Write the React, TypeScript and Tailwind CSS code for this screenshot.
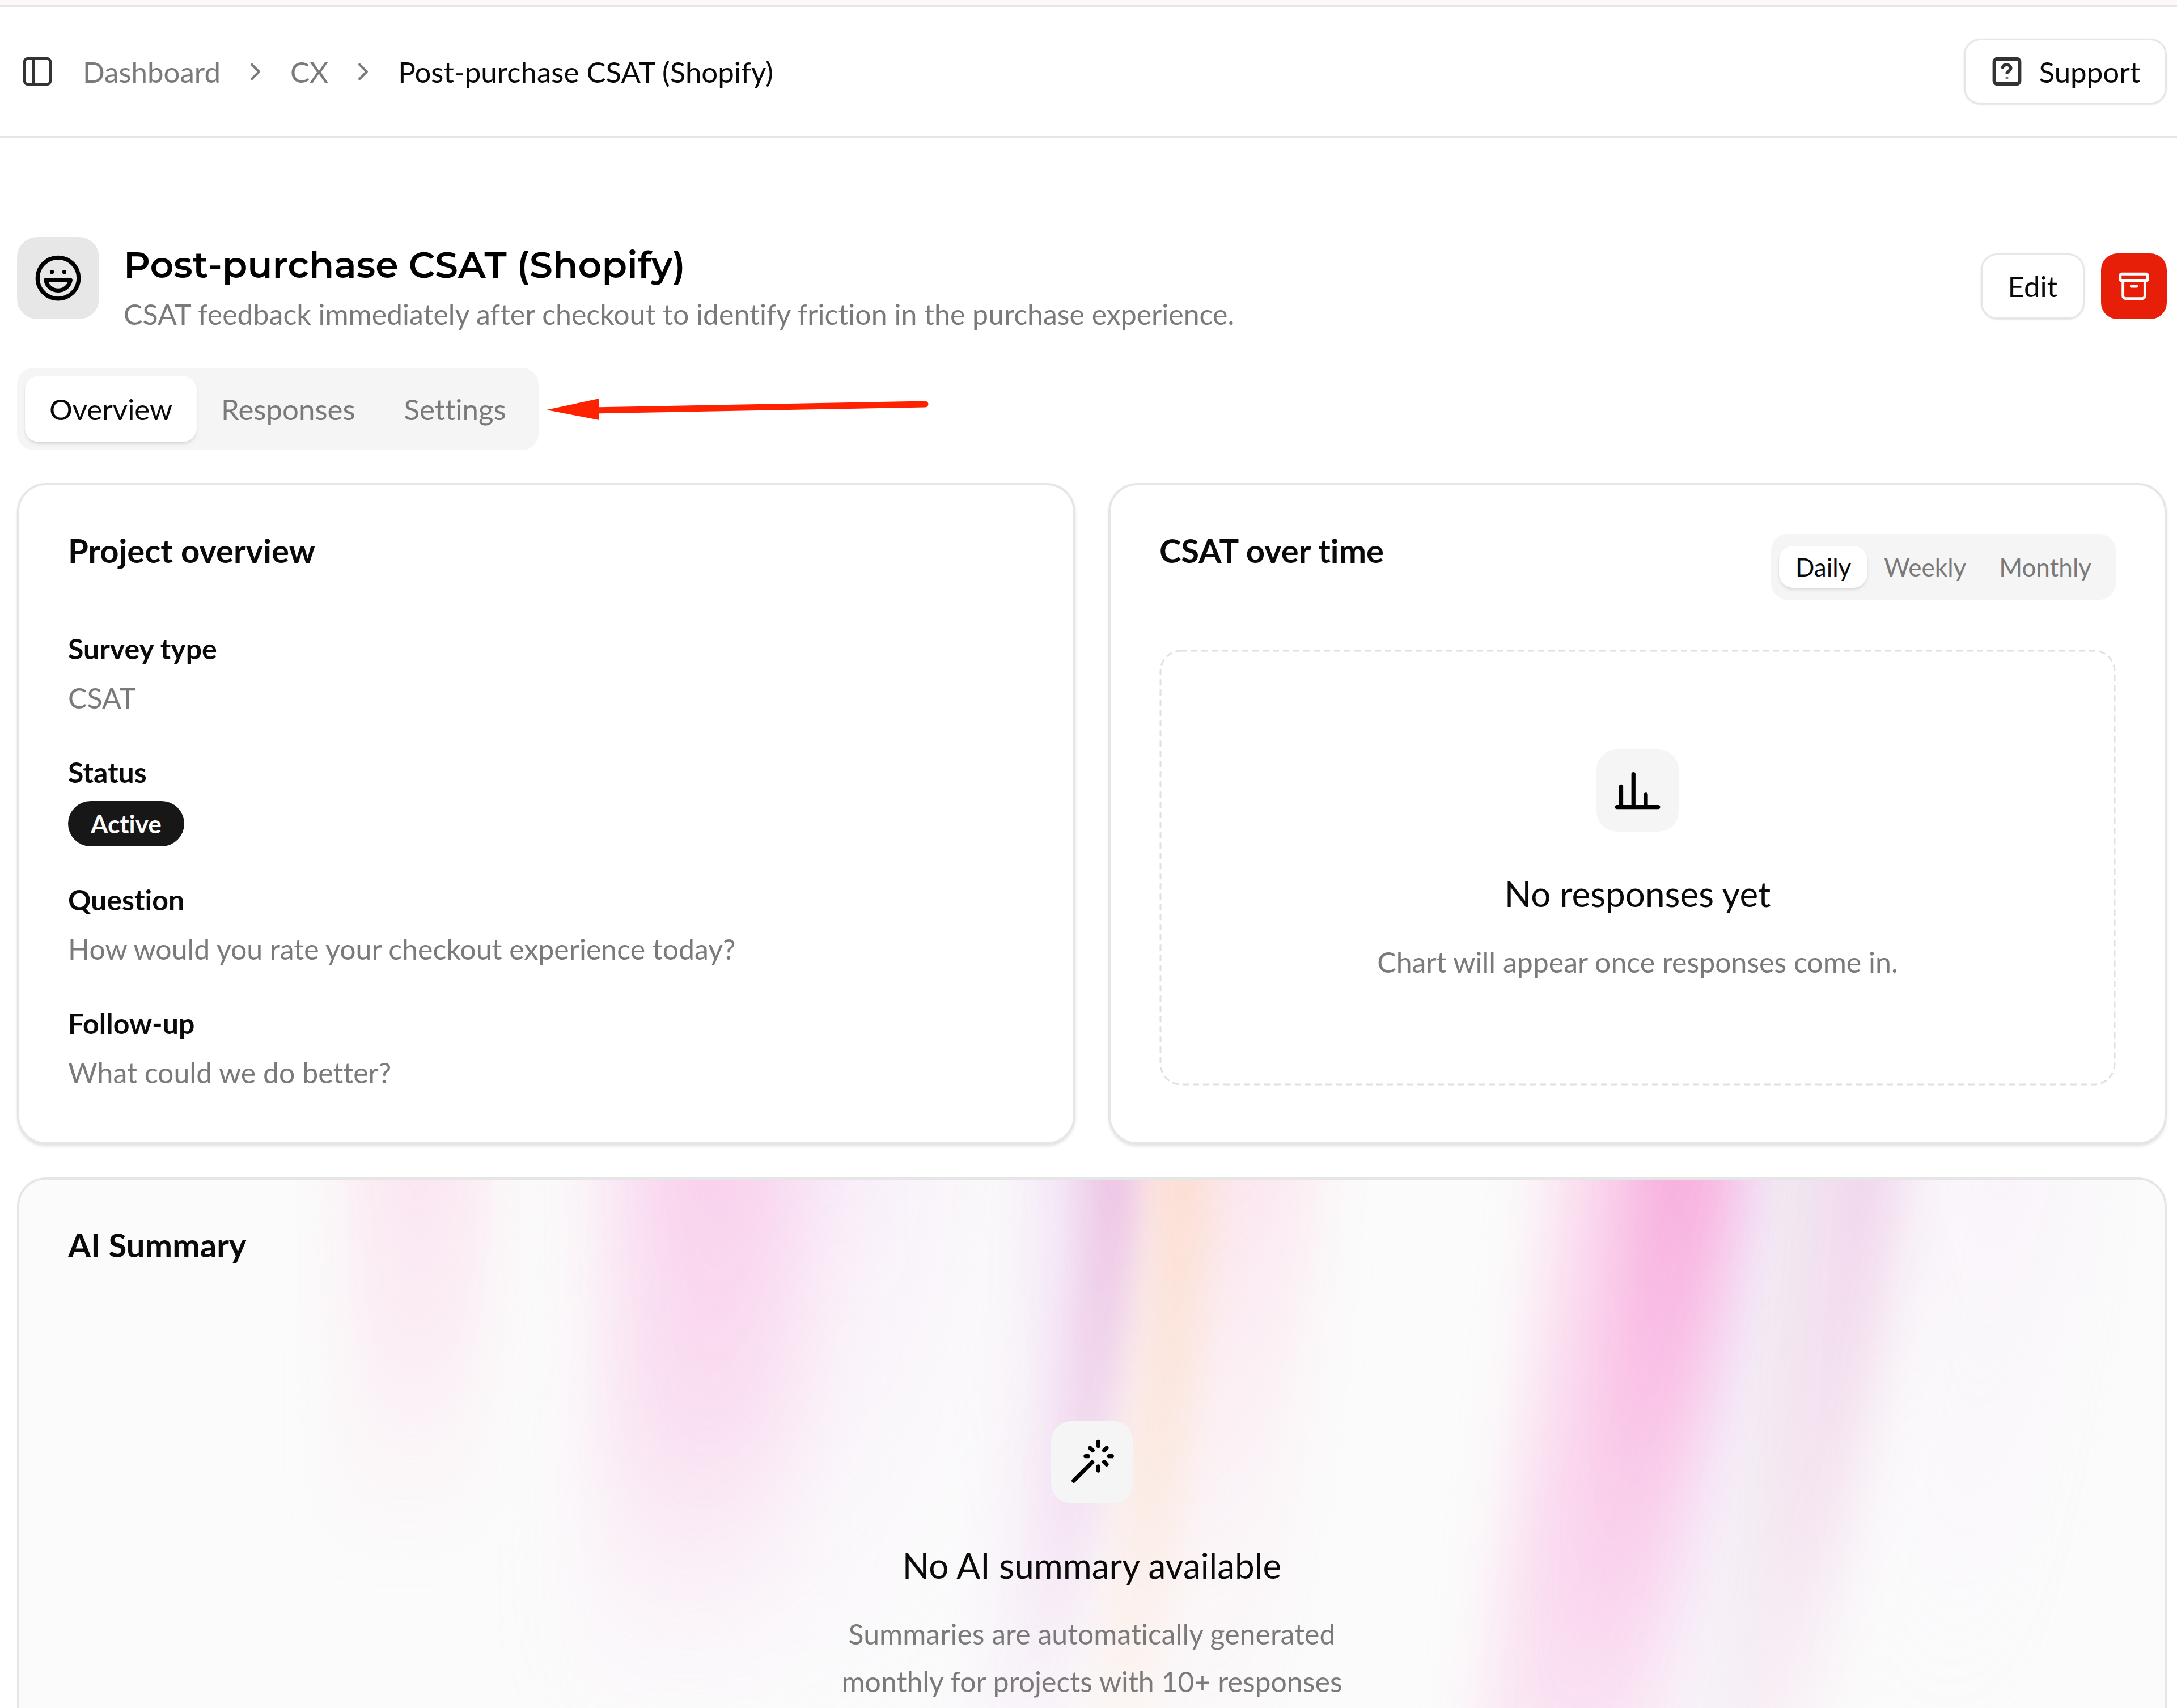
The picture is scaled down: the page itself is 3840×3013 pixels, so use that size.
import type { ReactNode } from "react";
import { Archive, ChevronRight, Laugh, PanelLeft } from "lucide-react";

const crumbs = ["Dashboard", "CX"];

const tabs = ["Overview", "Responses", "Settings"];

const ranges = ["Daily", "Weekly", "Monthly"];

const overviewRows = [
  { label: "Survey type", value: "CSAT" },
  { label: "Status", value: "Active", badge: true },
  { label: "Question", value: "How would you rate your checkout experience today?" },
  { label: "Follow-up", value: "What could we do better?" },
];

function HelpSquareIcon() {
  return (
    <svg viewBox="0 0 24 24" className="size-[58px]" fill="none" stroke="#333333" strokeWidth="2.6" strokeLinecap="round" strokeLinejoin="round" aria-hidden="true">
      <rect x="2.8" y="2.8" width="18.4" height="18.4" rx="2.2" />
      <path d="M8.9 9c.5-1.3 1.7-2 3.1-1.9 1.6.1 2.8 1.1 2.8 2.5 0 1.9-2.3 2.2-2.7 3.4" strokeWidth="2.3" />
      <path d="M11.7 16.7h.6" strokeWidth="1.6" stroke="#777777" />
    </svg>
  );
}

function BarsIcon() {
  return (
    <svg viewBox="0 0 24 24" className="size-[87px]" fill="none" stroke="currentColor" strokeWidth="2" strokeLinecap="round" strokeLinejoin="round" aria-hidden="true">
      <path d="M2 20h20M4 20V10M10 20V4M16 20v-6" />
    </svg>
  );
}

function WandIcon() {
  return (
    <svg viewBox="0 0 24 24" className="size-[87px]" fill="none" stroke="currentColor" strokeWidth="2" strokeLinecap="round" strokeLinejoin="round" aria-hidden="true">
      <path d="M15 4V2M15 16v-2M8.8 9H10M20.2 9h1.4M17.8 11.8 19 13M17.8 6.2 19 5M3 21l9-9M12.2 6.2 11 5" />
    </svg>
  );
}

function Arrow() {
  return (
    <svg viewBox="0 0 676 40" className="h-[40px] w-[676px]" aria-hidden="true">
      <path d="M80 22 668 11" stroke="#ff2200" strokeWidth="11" strokeLinecap="round" />
      <path d="M0 21 93 1v38Z" fill="#ff2200" />
    </svg>
  );
}

function Aurora() {
  return (
    <svg viewBox="0 0 1548 484" className="absolute top-0 left-0 w-full opacity-80" fill="none" aria-hidden="true">
      <defs>
        <filter id="soft" filterUnits="userSpaceOnUse" x="-100" y="-200" width="1800" height="900">
          <feGaussianBlur stdDeviation="32" />
        </filter>
        <filter id="mid" filterUnits="userSpaceOnUse" x="-100" y="-200" width="1800" height="900">
          <feGaussianBlur stdDeviation="22" />
        </filter>
        <filter id="tight" filterUnits="userSpaceOnUse" x="-100" y="-200" width="1800" height="900">
          <feGaussianBlur stdDeviation="14" />
        </filter>
        <linearGradient id="blush" gradientUnits="userSpaceOnUse" x1="0" y1="0" x2="0" y2="270">
          <stop offset="0" stopColor="#fbe1ef" />
          <stop offset=".4" stopColor="#fbe4f0" stopOpacity=".8" />
          <stop offset="1" stopColor="#fbe8f2" stopOpacity="0" />
        </linearGradient>
        <linearGradient id="rose" gradientUnits="userSpaceOnUse" x1="0" y1="0" x2="0" y2="370">
          <stop offset="0" stopColor="#f9c8e9" />
          <stop offset=".45" stopColor="#f9d0ec" stopOpacity=".85" />
          <stop offset="1" stopColor="#fae2f2" stopOpacity="0" />
        </linearGradient>
        <linearGradient id="haze" gradientUnits="userSpaceOnUse" x1="0" y1="0" x2="0" y2="440">
          <stop offset="0" stopColor="#f8eefa" />
          <stop offset="1" stopColor="#fbf6fc" stopOpacity="0" />
        </linearGradient>
        <linearGradient id="lavender" gradientUnits="userSpaceOnUse" x1="0" y1="0" x2="0" y2="430">
          <stop offset="0" stopColor="#f1dff5" />
          <stop offset="1" stopColor="#f7ebf9" stopOpacity=".5" />
        </linearGradient>
        <linearGradient id="lilac" gradientUnits="userSpaceOnUse" x1="0" y1="0" x2="0" y2="380">
          <stop offset="0" stopColor="#e9b6df" />
          <stop offset=".45" stopColor="#ecc2e4" stopOpacity=".7" />
          <stop offset="1" stopColor="#f3dcf3" stopOpacity="0" />
        </linearGradient>
        <linearGradient id="peach" gradientUnits="userSpaceOnUse" x1="0" y1="0" x2="0" y2="440">
          <stop offset="0" stopColor="#fdd8ca" />
          <stop offset=".45" stopColor="#fce3d6" stopOpacity=".85" />
          <stop offset="1" stopColor="#fdf0ea" stopOpacity=".35" />
        </linearGradient>
        <linearGradient id="petal" gradientUnits="userSpaceOnUse" x1="0" y1="0" x2="0" y2="420">
          <stop offset="0" stopColor="#fce2ed" />
          <stop offset="1" stopColor="#fbeef5" stopOpacity=".1" />
        </linearGradient>
        <linearGradient id="blossom" gradientUnits="userSpaceOnUse" x1="0" y1="0" x2="0" y2="484">
          <stop offset="0" stopColor="#fbd0ea" />
          <stop offset=".6" stopColor="#fad2ec" stopOpacity=".9" />
          <stop offset="1" stopColor="#fae0f2" stopOpacity=".7" />
        </linearGradient>
        <linearGradient id="hot" gradientUnits="userSpaceOnUse" x1="0" y1="0" x2="0" y2="420">
          <stop offset="0" stopColor="#f79bd8" />
          <stop offset=".35" stopColor="#f8a8de" stopOpacity=".8" />
          <stop offset="1" stopColor="#f8c8ea" stopOpacity=".05" />
        </linearGradient>
        <linearGradient id="violet" gradientUnits="userSpaceOnUse" x1="0" y1="0" x2="0" y2="484">
          <stop offset="0" stopColor="#ecdbf8" />
          <stop offset="1" stopColor="#f6ecfa" stopOpacity=".5" />
        </linearGradient>
        <linearGradient id="fog" gradientUnits="userSpaceOnUse" x1="0" y1="0" x2="0" y2="484">
          <stop offset="0" stopColor="#ebe6ec" />
          <stop offset="1" stopColor="#f3f0f3" stopOpacity=".5" />
        </linearGradient>
        <linearGradient id="mauve" gradientUnits="userSpaceOnUse" x1="0" y1="0" x2="0" y2="484">
          <stop offset="0" stopColor="#ecc6e5" />
          <stop offset=".5" stopColor="#f1d6ea" stopOpacity=".8" />
          <stop offset="1" stopColor="#f8eaf4" stopOpacity=".4" />
        </linearGradient>
      </defs>
      <path d="M288-120V60Q286 160 272 320" stroke="url(#blush)" strokeWidth="96" filter="url(#mid)" />
      <path d="M560-120V80Q550 220 500 440" stroke="url(#haze)" strokeWidth="230" filter="url(#soft)" />
      <path d="M500-120V60Q494 180 470 400" stroke="url(#rose)" strokeWidth="130" filter="url(#soft)" />
      <path d="M882-120Q877 160 825 500" stroke="url(#petal)" strokeWidth="110" filter="url(#mid)" />
      <path d="M765-120V20Q755 200 710 500" stroke="url(#lavender)" strokeWidth="74" filter="url(#mid)" />
      <path d="M791-120V20Q776 180 722 460" stroke="url(#lilac)" strokeWidth="44" filter="url(#tight)" />
      <path d="M838-120V20Q828 200 775 500" stroke="url(#peach)" strokeWidth="46" filter="url(#tight)" />
      <path d="M1250-120V0Q1232 180 1160 600" stroke="url(#violet)" strokeWidth="60" filter="url(#mid)" />
      <path d="M1288-120V0Q1270 180 1205 600" stroke="url(#fog)" strokeWidth="34" filter="url(#tight)" />
      <path d="M1168-120V0Q1150 180 1085 600" stroke="url(#blossom)" strokeWidth="120" filter="url(#mid)" />
      <path d="M1200-120V0Q1180 180 1105 520" stroke="url(#hot)" strokeWidth="74" filter="url(#mid)" />
      <path d="M1332-120V0Q1308 180 1220 600" stroke="url(#mauve)" strokeWidth="62" filter="url(#mid)" />
      <path d="M1430-120V0Q1410 200 1380 480" stroke="url(#haze)" strokeOpacity=".7" strokeWidth="110" filter="url(#soft)" />
    </svg>
  );
}

function EmptyState({ icon, title, children }: { icon: ReactNode; title: string; children: ReactNode }) {
  return (
    <div className="flex flex-col items-center py-[176px] text-center">
      <div className="flex size-[145px] items-center justify-center rounded-[36px] bg-neutral-100 text-black">{icon}</div>
      <h3 className="mt-[58px] text-[62px] leading-[102px]">{title}</h3>
      <p className="mt-[28px] text-[50px] leading-[84px] text-[#7a7a7a]">{children}</p>
    </div>
  );
}

export default function App() {
  return (
    <div className="h-screen overflow-hidden bg-white font-['Lato',sans-serif] text-[51px] leading-[73px] text-neutral-950 [font-variant-ligatures:no-common-ligatures]">
      <div className="h-[12px] border-b-4 border-[#e6e6e6] bg-[#fcf7f8]" />

      <header className="flex h-[232px] items-center justify-between border-b-4 border-[#e6e6e6] pr-[18px] pl-[36px]">
        <div className="flex items-center gap-[50px]">
          <button type="button" aria-label="Toggle sidebar">
            <PanelLeft className="size-[60px] text-[#333333]" />
          </button>
          <nav className="flex items-center gap-[36px]" aria-label="Breadcrumb">
            {crumbs.map((crumb) => (
              <div key={crumb} className="flex items-center gap-[36px] text-[#7a7a7a]">
                <a href="#">{crumb}</a>
                <ChevronRight className="size-[51px]" />
              </div>
            ))}
            <span aria-current="page">Post-purchase CSAT (Shopify)</span>
          </nav>
        </div>
        <button type="button" className="flex h-[116px] items-center gap-[27px] rounded-[29px] border-3 border-[#e6e6e6] px-[44px] shadow-sm">
          <HelpSquareIcon />
          Support
        </button>
      </header>

      <main className="pt-[174px] pr-[18px] pl-[30px]">
        {/* Project heading */}
        <div className="flex items-center justify-between">
          <div className="flex gap-[43px]">
            <div className="flex size-[145px] items-center justify-center rounded-[36px] bg-[#e7e7e7]">
              <Laugh className="size-[87px] text-black" />
            </div>
            <div className="pt-[5px]">
              <h1 className="font-['Montserrat','Inter',sans-serif] text-[65px] leading-[88px] font-semibold text-black">
                Post-purchase CSAT (Shopify)
              </h1>
              <p className="mt-[7px] text-[50px] text-[#7a7a7a]">
                CSAT feedback immediately after checkout to identify friction in the purchase experience.
              </p>
            </div>
          </div>
          <div className="flex gap-[29px]">
            <button type="button" className="h-[116px] rounded-[29px] border-3 border-[#e6e6e6] px-[45px] shadow-sm">
              Edit
            </button>
            <button type="button" aria-label="Archive" className="flex size-[116px] items-center justify-center rounded-[29px] bg-[#e71f09] text-white">
              <Archive className="size-[58px]" />
            </button>
          </div>
        </div>

        {/* Section tabs */}
        <div className="mt-[58px] flex items-center gap-[14px]">
          <div role="tablist" className="flex rounded-[29px] bg-neutral-100 p-[14px] text-[#7a7a7a]">
            {tabs.map((tab) => (
              <button
                key={tab}
                type="button"
                role="tab"
                aria-selected={tab === "Overview"}
                className="h-[117px] rounded-[25px] px-[43px] aria-selected:bg-white aria-selected:text-neutral-950 aria-selected:shadow-md"
              >
                {tab}
              </button>
            ))}
          </div>
          <Arrow />
        </div>

        <div className="mt-[58px] grid grid-cols-2 gap-[58px]">
          <section className="rounded-[51px] border-4 border-[#e6e6e6] p-[86px] shadow-md">
            <h2 className="text-[58px] leading-[58px] font-bold">Project overview</h2>
            <dl className="mt-[108px] flex flex-col gap-[58px]">
              {overviewRows.map((row) => (
                <div key={row.label} className="flex flex-col items-start gap-[14px]">
                  <dt className="text-[50px] font-bold">{row.label}</dt>
                  {row.badge ? (
                    <dd className="rounded-full bg-[#171717] px-[40px] py-[11px] text-[44px] leading-[58px] font-bold text-neutral-50">
                      {row.value}
                    </dd>
                  ) : (
                    <dd className="text-[50px] text-[#7a7a7a]">{row.value}</dd>
                  )}
                </div>
              ))}
            </dl>
          </section>

          <section className="rounded-[51px] border-4 border-[#e6e6e6] p-[86px] shadow-md">
            <div className="flex items-start justify-between">
              <h2 className="text-[58px] leading-[58px] font-bold">CSAT over time</h2>
              <div role="tablist" className="flex h-[116px] items-center rounded-[29px] bg-neutral-100 px-[14px] text-[44px] text-[#7a7a7a]">
                {ranges.map((range) => (
                  <button
                    key={range}
                    type="button"
                    role="tab"
                    aria-selected={range === "Daily"}
                    className="h-[74px] rounded-[25px] px-[29px] aria-selected:bg-white aria-selected:text-neutral-950 aria-selected:shadow-md"
                  >
                    {range}
                  </button>
                ))}
              </div>
            </div>
            <div className="relative mt-[88px]">
              <svg className="absolute inset-0 size-full" fill="none" aria-hidden="true">
                <rect x="2" y="2" rx="36" className="h-[calc(100%-4px)] w-[calc(100%-4px)]" stroke="#e0e0e0" strokeWidth="3" strokeDasharray="11 7" />
              </svg>
              <EmptyState icon={<BarsIcon />} title="No responses yet">
                Chart will appear once responses come in.
              </EmptyState>
            </div>
          </section>
        </div>

        <section className="relative mt-[58px] overflow-hidden rounded-[51px] border-4 border-[#e6e6e6] bg-[#fbfbfb] p-[86px]">
          <Aurora />
          <div className="relative">
            <h2 className="mb-[106px] text-[58px] leading-[58px] font-bold">AI Summary</h2>
            <EmptyState icon={<WandIcon />} title="No AI summary available">
              Summaries are automatically generated
              <br />
              monthly for projects with 10+ responses
            </EmptyState>
          </div>
        </section>
      </main>
    </div>
  );
}
